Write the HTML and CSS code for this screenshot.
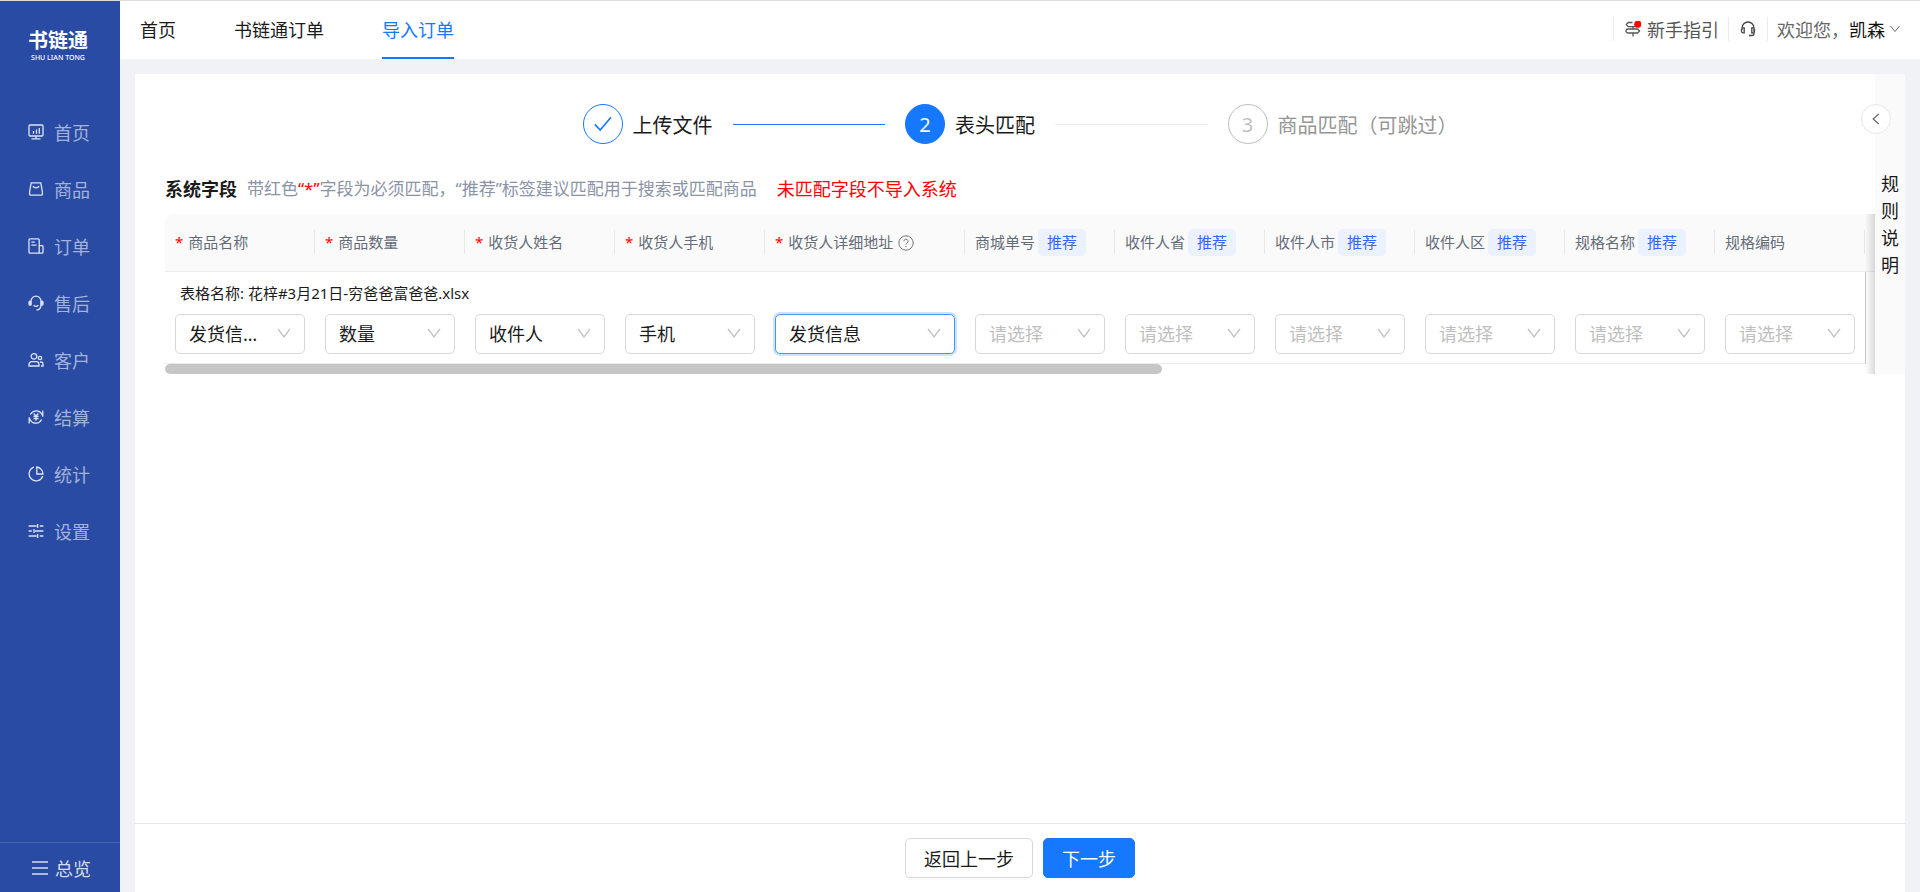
FILE: index.html
```html
<!DOCTYPE html>
<html lang="zh-CN">
<head>
<meta charset="utf-8">
<title>导入订单 - 书链通</title>
<link rel="stylesheet" href="styles.css">
</head>
<body>
<div class="app">
  <aside class="sidebar">
    <div class="logo">
      <span class="logo-name">书链通</span>
      <span class="logo-latin">SHU LIAN TONG</span>
    </div>
    <nav class="menu">
      <a class="menu-item" href="#"><svg class="icon" viewBox="0 0 16 16"><rect x="1" y="1" width="14" height="11" rx="1"/><path d="M8 12v2.500M3.500 14.800h9M5.500 7v2.800M8.500 5.500v4.300M11.300 4v5.800"/></svg>首页</a>
      <a class="menu-item" href="#"><svg class="icon" viewBox="0 0 16 16"><path d="M3.200 1.800h9.600l1.600 9v2.400a1 1 0 0 1-1 1H2.600a1 1 0 0 1-1-1v-2.400zM5 5c.8 2.400 5.200 2.400 6 0"/></svg>商品</a>
      <a class="menu-item" href="#"><svg class="icon" viewBox="0 0 16 16"><path d="M11.2 15.2H2a1 1 0 0 1-1-1V1.8a1 1 0 0 1 1-1h8.2a1 1 0 0 1 1 1v13.4M11.2 7.6h3a.8.8 0 0 1 .8.8v5.8a1 1 0 0 1-1 1h-2.8M3.4 4.2h3.4M3.4 7.2h5.2"/></svg>订单</a>
      <a class="menu-item" href="#"><svg class="icon" viewBox="0 0 16 16"><path d="M3 10V6.2a5 5 0 0 1 10 0V10c0 3-2 4.800-4.600 5.200M5.600 10.200c1.400 1.500 3.400 1.500 4.800 0"/><path class="solid" d="M3.300 5.600v5.200H2A1.600 1.600 0 0 1 .4 9.200v-2A1.600 1.600 0 0 1 2 5.600zM12.700 5.600v5.200H14a1.600 1.600 0 0 0 1.600-1.600v-2A1.600 1.600 0 0 0 14 5.600z"/></svg>售后</a>
      <a class="menu-item" href="#"><svg class="icon" viewBox="0 0 16 16"><circle cx="6" cy="4.400" r="2.800"/><circle cx="12" cy="6" r="1.700"/><path d="M1 14v-1.500a2.800 2.800 0 0 1 2.800-2.800h4.400a2.800 2.800 0 0 1 2.800 2.800V14zM12 10h1a2 2 0 0 1 2 2v2h-2"/></svg>客户</a>
      <a class="menu-item" href="#"><svg class="icon" viewBox="0 0 16 16"><path d="M2.400 5.500A6.500 6.500 0 0 1 13.600 4.600M13.600 10.500A6.500 6.500 0 0 1 2.400 11.400M14.800 1.500v6.300M1.200 8.200v6.300M13.600 4.600l1.200 2.600M2.400 11.400L1.200 8.800M5.700 4.500L8 7.200l2.300-2.700M8 7.200v4.600M5.500 7.500h5M5.500 9.600h5"/></svg>结算</a>
      <a class="menu-item" href="#"><svg class="icon" viewBox="0 0 16 16"><path d="M6 1.200A7 7 0 1 0 14.800 10M8.800 1v7H15A7 7 0 0 0 8.800 1z"/></svg>统计</a>
      <a class="menu-item" href="#"><svg class="icon" viewBox="0 0 16 16"><path d="M.6 3h8M11.800 3h3.600M9.600 1v4M.6 8h3.200M7 8h8.400M6 6v4M.6 13h8M11.800 13h3.600M9.600 11v4"/></svg>设置</a>
    </nav>
    <a class="overview" href="#"><svg class="icon" viewBox="0 0 16 16"><path d="M0 2h16M0 8h16M0 14h16"/></svg>总览</a>
  </aside>

  <div class="page">
    <header class="topbar">
      <nav class="tabs">
        <a class="tab" href="#">首页</a>
        <a class="tab" href="#">书链通订单</a>
        <a class="tab tab-active" href="#">导入订单</a>
      </nav>
      <div class="tools">
        <a class="tool tool-guide" href="#"><svg class="icon" viewBox="0 0 16 16"><path d="M7.500 1.500H3.200L1.300 3.600l1.900 2.100H13M3 8h9.600l2 2-2 2H3a2 2 0 0 1 0-4zM8 5.700V8M8 12v3.500"/><circle class="dot" cx="12.800" cy="3.200" r="3.600"/></svg>新手指引</a>
        <a class="tool tool-service" href="#" aria-label="客服"><svg class="icon" viewBox="0 0 16 16"><path d="M2 9V7a6 6 0 0 1 12 0v5.500c0 1.300-.8 2-2 2H9M2 6.800h2.200v5H3a1.500 1.500 0 0 1-1.500-1.500V8M14 6.800h-2.200v5H13a1.500 1.500 0 0 0 1.500-1.500V8"/></svg></a>
        <button class="tool tool-user" type="button"><span class="hello">欢迎您，</span>凯森<svg class="chevron" viewBox="0 0 10 10"><path d="M.5 2L5 7.500 9.500 2"/></svg></button>
      </div>
    </header>

    <main class="panel">
      <div class="workspace">
        <section class="content">
          <ol class="steps">
            <li class="step step-done"><span class="step-mark"><svg class="check" viewBox="0 0 18 16"><path d="M.8 8.400L6.200 14 17 1.200"/></svg></span>上传文件</li>
            <li class="step step-current"><span class="step-mark">2</span>表头匹配</li>
            <li class="step step-wait"><span class="step-mark">3</span>商品匹配（可跳过）</li>
          </ol>
          <div class="caption">
            <h1 class="caption-title">系统字段</h1>
            <p class="caption-text">带红色<span class="red">“*”</span>字段为必须匹配，“推荐”标签建议匹配用于搜索或匹配商品</p>
            <p class="caption-warn">未匹配字段不导入系统</p>
          </div>
          <div class="table-wrap">
            <table class="fields">
              <colgroup><col span="4"><col class="col-wide"><col span="6"><col class="col-rest"></colgroup>
              <thead>
                <tr>
                  <th class="plain"><span class="star">*</span>商品名称</th>
                  <th class="plain"><span class="star">*</span>商品数量</th>
                  <th class="plain"><span class="star">*</span>收货人姓名</th>
                  <th class="plain"><span class="star">*</span>收货人手机</th>
                  <th class="plain"><span class="star">*</span>收货人详细地址<svg class="help" viewBox="0 0 16 16"><circle cx="8" cy="8" r="7.200"/><path d="M5.900 6.300a2.100 2.100 0 1 1 3 1.900c-.6.3-.9.600-.9 1.400M8 11v1.200"/></svg></th>
                  <th>商城单号<span class="tag">推荐</span></th>
                  <th>收件人省<span class="tag">推荐</span></th>
                  <th>收件人市<span class="tag">推荐</span></th>
                  <th>收件人区<span class="tag">推荐</span></th>
                  <th>规格名称<span class="tag">推荐</span></th>
                  <th class="plain">规格编码</th>
                  <th></th>
                </tr>
              </thead>
              <tbody>
                <tr class="file-row"><td colspan="11">表格名称: 花梓#3月21日-穷爸爸富爸爸.xlsx</td><td class="edge"></td></tr>
                <tr class="select-row">
                  <td><div class="pick"><select aria-label="商品名称"><option>发货信息</option></select><svg class="arrow" viewBox="0 0 14 10"><path d="M1 .8l6 8 6-8"/></svg></div></td>
                  <td><div class="pick"><select aria-label="商品数量"><option>数量</option></select><svg class="arrow" viewBox="0 0 14 10"><path d="M1 .8l6 8 6-8"/></svg></div></td>
                  <td><div class="pick"><select aria-label="收货人姓名"><option>收件人</option></select><svg class="arrow" viewBox="0 0 14 10"><path d="M1 .8l6 8 6-8"/></svg></div></td>
                  <td><div class="pick"><select aria-label="收货人手机"><option>手机</option></select><svg class="arrow" viewBox="0 0 14 10"><path d="M1 .8l6 8 6-8"/></svg></div></td>
                  <td><div class="pick pick-focus"><select aria-label="收货人详细地址"><option>发货信息</option></select><svg class="arrow" viewBox="0 0 14 10"><path d="M1 .8l6 8 6-8"/></svg></div></td>
                  <td><div class="pick pick-empty"><select aria-label="商城单号"><option>请选择</option></select><svg class="arrow" viewBox="0 0 14 10"><path d="M1 .8l6 8 6-8"/></svg></div></td>
                  <td><div class="pick pick-empty"><select aria-label="收件人省"><option>请选择</option></select><svg class="arrow" viewBox="0 0 14 10"><path d="M1 .8l6 8 6-8"/></svg></div></td>
                  <td><div class="pick pick-empty"><select aria-label="收件人市"><option>请选择</option></select><svg class="arrow" viewBox="0 0 14 10"><path d="M1 .8l6 8 6-8"/></svg></div></td>
                  <td><div class="pick pick-empty"><select aria-label="收件人区"><option>请选择</option></select><svg class="arrow" viewBox="0 0 14 10"><path d="M1 .8l6 8 6-8"/></svg></div></td>
                  <td><div class="pick pick-empty"><select aria-label="规格名称"><option>请选择</option></select><svg class="arrow" viewBox="0 0 14 10"><path d="M1 .8l6 8 6-8"/></svg></div></td>
                  <td><div class="pick pick-empty"><select aria-label="规格编码"><option>请选择</option></select><svg class="arrow" viewBox="0 0 14 10"><path d="M1 .8l6 8 6-8"/></svg></div></td>
                  <td class="edge"></td>
                </tr>
              </tbody>
            </table>
            <div class="scrollbar"><div class="scroll-thumb"></div></div>
          </div>
        </section>
        <aside class="rules">
          <button class="rules-toggle" type="button" aria-label="展开"><svg viewBox="0 0 8 12"><path d="M6.800 1L1.200 6l5.600 5"/></svg></button>
          <span class="rules-title">规则说明</span>
        </aside>
      </div>
      <footer class="actions">
        <button class="btn" type="button">返回上一步</button>
        <button class="btn btn-primary" type="button">下一步</button>
      </footer>
    </main>
  </div>
</div>
</body>
</html>
```
FILE: styles.css
```css
* { box-sizing: border-box; }

body {
  margin: 0;
  font-family: "Noto Sans", "Noto Sans CJK SC", sans-serif;
  font-size: 18px;
  font-weight: 400;
  color: #1a1a1a;
  background: #f0f2f5;
}

a { color: inherit; text-decoration: none; }
button, select { font: inherit; color: inherit; }
p, h1, ol { margin: 0; padding: 0; }

svg { fill: none; stroke: currentColor; flex: none; }
.icon { width: 16px; height: 16px; stroke-width: 1.3; }
.solid { fill: currentColor; stroke: none; }

.app {
  display: flex;
  min-height: 100vh;
  border-top: 1px solid #dcdcdc;
}

/* Sidebar */
.sidebar {
  flex: none;
  width: 120px;
  display: flex;
  flex-direction: column;
  background: #294ba3;
}
.logo {
  display: flex;
  flex-direction: column;
  align-items: center;
  padding: 28px 4px 40px 0;
  color: #fff;
}
.logo-name { font-size: 20px; font-weight: 700; line-height: 24px; }
.logo-latin { font-size: 7px; font-weight: 500; line-height: 10px; }
.menu { flex: 1; }
.menu-item {
  display: flex;
  align-items: center;
  gap: 10px;
  height: 57px;
  padding-left: 28px;
  color: #a3b3dc;
}
.menu-item .icon { color: #dde4f4; }
.overview {
  display: flex;
  align-items: center;
  gap: 7px;
  height: 50px;
  padding-left: 32px;
  border-top: 1px solid #4765b1;
  color: #d6def1;
}

/* Top bar */
.page {
  flex: 1;
  min-width: 0;
  display: flex;
  flex-direction: column;
}
.topbar {
  display: flex;
  justify-content: space-between;
  height: 58px;
  padding: 0 20px;
  background: #fff;
}
.tabs { display: flex; gap: 58px; }
.tab { line-height: 56px; height: 58px; padding-top: 1px; }
.tab-active { color: #1677ff; border-bottom: 2px solid #1677ff; }
.tools { display: flex; align-items: center; padding-bottom: 2px; }
.tool {
  display: flex;
  align-items: center;
  height: 24px;
  padding: 0 11px;
  border: 0;
  border-left: 1px solid #ececec;
  background: none;
  color: #444;
}
.tool-guide { gap: 6px; padding-right: 9px; color: #555; }
.tool-user { padding: 0 0 0 9px; color: #111; }
.hello { color: #666; }
.dot { fill: #f00; stroke: none; }
.chevron { width: 10px; height: 10px; margin-left: 5px; color: #666; }

/* Panel */
.panel {
  flex: 1;
  display: flex;
  flex-direction: column;
  margin: 15px 15px 0;
  background: #fff;
}
.workspace { flex: 1; display: flex; align-items: flex-start; }
.content { flex: 1; min-width: 0; padding: 30px 0 0 30px; }
.steps {
  display: flex;
  width: 50%;
  min-width: 875px;
  margin: 0 auto;
  list-style: none;
  font-size: 20px;
}
.step { display: flex; align-items: center; gap: 10px; white-space: nowrap; }
.step:not(:last-child) { flex: 1; margin-right: 20px; }
.step:not(:last-child)::after {
  content: "";
  flex: 1;
  height: 1px;
  margin-left: 10px;
  background: #ececec;
}
.step.step-done::after { background: #1677ff; }
.step-mark {
  display: flex;
  align-items: center;
  justify-content: center;
  width: 40px;
  height: 40px;
  border: 1px solid #1677ff;
  border-radius: 50%;
  color: #1677ff;
}
.check { width: 18px; height: 16px; stroke-width: 1.6; }
.step-current .step-mark { background: #1677ff; color: #fff; }
.step-wait { color: #969696; }
.step-wait .step-mark { border-color: #bfbfbf; color: #bfbfbf; }

.caption { display: flex; align-items: center; height: 27px; margin: 30px 0 13px; white-space: nowrap; }
.caption-title { font-size: 18px; font-weight: 700; margin-right: 10px; }
.caption-text { font-size: 17px; color: #8b93a7; margin-right: 20px; }
.caption-warn, .red { color: #f00; }

/* Field table */
.table-wrap { position: relative; overflow: hidden; border-radius: 8px 0 0 0; }
.table-wrap::after {
  content: "";
  position: absolute;
  top: 0;
  right: 0;
  bottom: 0;
  width: 10px;
  background: linear-gradient(to right, rgba(0, 0, 0, 0), rgba(0, 0, 0, 0.14));
}
.fields {
  width: 100%;
  min-width: 1710px;
  table-layout: fixed;
  border-collapse: separate;
  border-spacing: 0;
  font-size: 15px;
}
.fields col { width: 150px; }
.fields col.col-wide { width: 200px; }
.fields col.col-rest { width: auto; }
.fields th {
  position: relative;
  height: 58px;
  padding: 0 10px;
  text-align: left;
  font-weight: 400;
  white-space: nowrap;
  color: #656c78;
  background: #fafafa;
  border-bottom: 1px solid #ececec;
}
.fields th.plain { padding-bottom: 2px; }
.fields th:not(:last-child)::after {
  content: "";
  position: absolute;
  top: 16px;
  right: 0;
  width: 1px;
  height: 24px;
  background: #e8e8e8;
}
.star { color: #f00; margin-right: 5px; }
.help { width: 16px; height: 16px; margin-left: 5px; vertical-align: -3px; color: #777; }
.tag {
  display: inline-block;
  margin-left: 3px;
  padding: 0 9px;
  line-height: 27px;
  border-radius: 5px;
  background: #ebf1ff;
  color: #3366ff;
}
.fields td { padding: 0 10px; }
.fields th:last-child { padding: 0; }
.file-row td { height: 42px; padding: 0 15px 2px; }
.select-row td { padding-bottom: 9px; border-bottom: 1px solid #ececec; }
.fields td.edge { padding: 0; border-left: 1px solid #c8c8c8; border-bottom: 0; }
.pick { position: relative; }
.pick select {
  display: block;
  width: 100%;
  height: 40px;
  padding: 0 44px 0 13px;
  font-size: 18px;
  appearance: none;
  text-overflow: ellipsis;
  border: 1px solid #d9d9d9;
  border-radius: 5px;
  background: #fff;
  color: #1a1a1a;
}
.pick-empty select { color: #bfbfbf; }
.pick-focus select { border-color: #4096ff; box-shadow: 0 0 0 2px #cfe3ff; }
.arrow {
  position: absolute;
  top: 14px;
  right: 14px;
  width: 14px;
  height: 10px;
  color: #bfbfbf;
  stroke-width: 1.3;
  pointer-events: none;
}
.scrollbar { height: 10px; }
.scroll-thumb { width: 58.3%; height: 10px; border-radius: 5px; background: #c6c6c6; }

/* Rules drawer */
.rules {
  position: relative;
  flex: none;
  display: flex;
  justify-content: center;
  width: 30px;
  align-self: flex-start;
  min-height: 300px;
  padding: 97px 6px 0;
  background: #fafafa;
}
.rules-title { width: 18px; line-height: 27px; }
.rules-toggle {
  position: absolute;
  top: 30px;
  left: -14px;
  z-index: 1;
  display: flex;
  align-items: center;
  justify-content: center;
  width: 30px;
  height: 30px;
  padding: 0;
  border: 1px solid #e6e6e6;
  border-radius: 50%;
  background: #fff;
  color: #667;
}
.rules-toggle svg { width: 8px; height: 12px; stroke-width: 1.2; }

/* Footer */
.actions {
  display: flex;
  justify-content: center;
  gap: 10px;
  padding: 14px 0;
  border-top: 1px solid #e5e7ea;
}
.btn {
  height: 40px;
  padding: 0 18px;
  border: 1px solid #d9d9d9;
  border-radius: 5px;
  background: #fff;
  box-shadow: 0 2px 0 rgba(0, 0, 0, 0.02);
}
.btn-primary { border-color: #1677ff; background: #1677ff; color: #fff; }
```
